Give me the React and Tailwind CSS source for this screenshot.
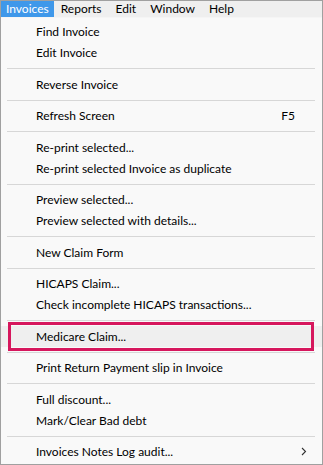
const TOP_MENUS = ["Invoices", "Reports", "Edit", "Window", "Help"];

// null = separator
const ITEMS = [
  { label: "Find Invoice" },
  { label: "Edit Invoice" },
  null,
  { label: "Reverse Invoice" },
  null,
  { label: "Refresh Screen", shortcut: "F5" },
  null,
  { label: "Re-print selected..." },
  { label: "Re-print selected Invoice as duplicate" },
  null,
  { label: "Preview selected..." },
  { label: "Preview selected with details..." },
  null,
  { label: "New Claim Form" },
  null,
  { label: "HICAPS Claim..." },
  { label: "Check incomplete HICAPS transactions..." },
  null,
  { label: "Medicare Claim...", hover: true },
  null,
  { label: "Print Return Payment slip in Invoice" },
  null,
  { label: "Full discount..." },
  { label: "Mark/Clear Bad debt" },
  null,
  { label: "Invoices Notes Log audit...", submenu: true },
];

export default function App() {
  let sep = 0;
  return (
    <div
      className="w-[323px] h-[465px] bg-[#f9f9f9] border border-[#a0a0a0] text-[12px] text-black overflow-hidden flex flex-col"
      style={{ fontFamily: '"Segoe UI", Lato, "Noto Sans", sans-serif' }}
    >
      {/* Menu bar */}
      <div className="h-[17px] bg-[#efefef] flex items-center shrink-0 border-b border-[#f5f5f5]">
        {TOP_MENUS.map((m, i) => (
          <div
            key={m}
            className={
              i === 0
                ? "h-full px-[5px] flex items-center bg-[#3f98ea] text-white"
                : "h-full px-[7px] flex items-center"
            }
          >
            {m}
          </div>
        ))}
      </div>

      {/* Dropdown */}
      <div className="relative flex flex-col pt-[3px]">
        {ITEMS.map((item, i) => {
          if (!item) {
            sep += 1;
            return (
              <div key={i} className={`${sep % 2 ? "h-[11px]" : "h-[10px]"} flex items-center pl-[6px] pr-[7px]`}>
                <div className="h-px w-full bg-[#d7d7d7]" />
              </div>
            );
          }
          return (
            <div
              key={i}
              className={`relative h-[21px] flex items-center pl-[35px] pr-[27px] ${
                item.hover ? "bg-[#efefef]" : ""
              }`}
            >
              <span className="flex-1 leading-none">{item.label}</span>
              {item.shortcut && <span className="leading-none">{item.shortcut}</span>}
              {item.submenu && (
                <svg width="6" height="9" viewBox="0 0 6 9" className="absolute right-[15px]">
                  <path d="M1 1 L4.5 4.5 L1 8" fill="none" stroke="#333" strokeWidth="1.1" />
                </svg>
              )}
              {item.hover && (
                <div className="absolute left-[7px] right-[8px] top-[-4px] bottom-[-4px] border-[3px] border-[#d6175d]" />
              )}
            </div>
          );
        })}
      </div>
    </div>
  );
}
